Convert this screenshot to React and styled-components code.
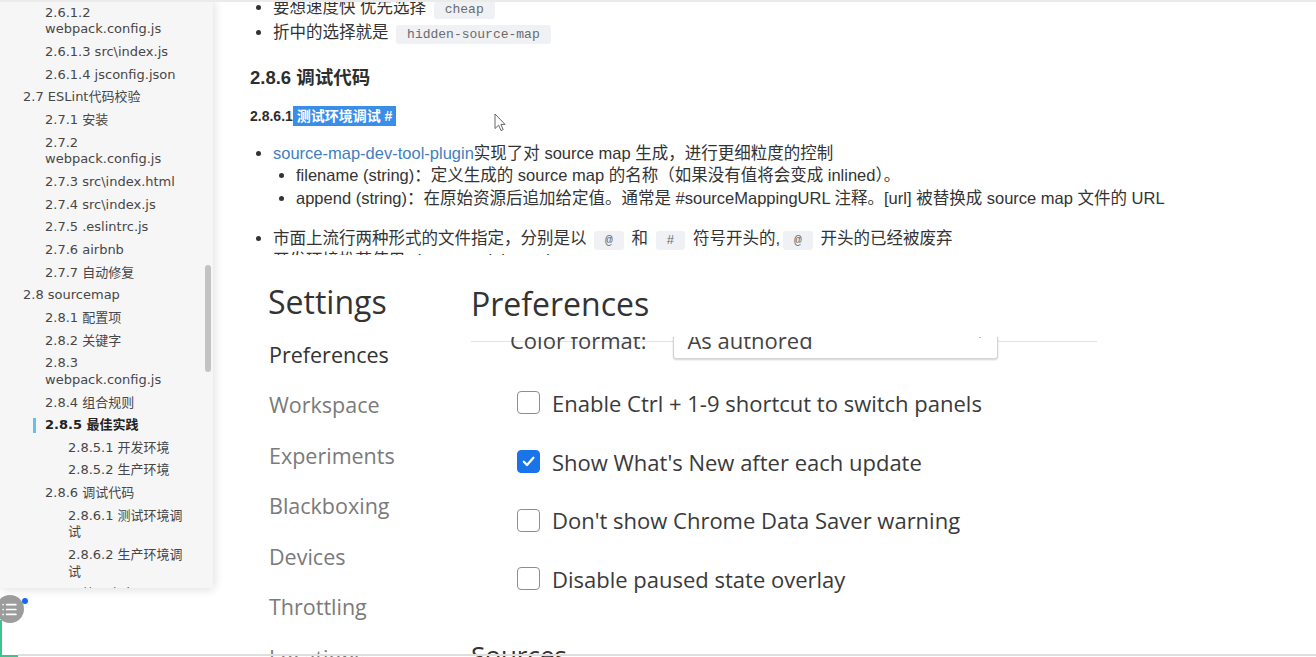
import React from 'react';
import styled, { createGlobalStyle } from 'styled-components';
import { List as ListIcon } from 'lucide-react';

const GlobalStyle = createGlobalStyle`
  html, body {
    margin: 0;
    padding: 0;
    background: #fff;
  }
  body {
    width: 1316px;
    height: 657px;
    overflow: hidden;
    font-family: "Liberation Sans", "Noto Sans CJK SC", sans-serif;
  }
  * {
    box-sizing: border-box;
  }
`;

const toc = [
  { level: 1, text: '2.6.1.2 webpack.config.js' },
  { level: 1, text: '2.6.1.3 src\\index.js' },
  { level: 1, text: '2.6.1.4 jsconfig.json' },
  { level: 0, text: '2.7 ESLint代码校验' },
  { level: 1, text: '2.7.1 安装' },
  { level: 1, text: '2.7.2 webpack.config.js' },
  { level: 1, text: '2.7.3 src\\index.html' },
  { level: 1, text: '2.7.4 src\\index.js' },
  { level: 1, text: '2.7.5 .eslintrc.js' },
  { level: 1, text: '2.7.6 airbnb' },
  { level: 1, text: '2.7.7 自动修复' },
  { level: 0, text: '2.8 sourcemap' },
  { level: 1, text: '2.8.1 配置项' },
  { level: 1, text: '2.8.2 关键字' },
  { level: 1, text: '2.8.3 webpack.config.js' },
  { level: 1, text: '2.8.4 组合规则' },
  { level: 1, text: '2.8.5 最佳实践', active: true },
  { level: 2, text: '2.8.5.1 开发环境' },
  { level: 2, text: '2.8.5.2 生产环境' },
  { level: 1, text: '2.8.6 调试代码' },
  { level: 2, text: '2.8.6.1 测试环境调试' },
  { level: 2, text: '2.8.6.2 生产环境调试' },
  { level: 1, text: '2.8.7 第三方库' },
];

const navItems = ['Preferences', 'Workspace', 'Experiments', 'Blackboxing', 'Devices', 'Throttling', 'Locations'];

const options = [
  { label: 'Enable Ctrl + 1-9 shortcut to switch panels', checked: false },
  { label: "Show What's New after each update", checked: true },
  { label: "Don't show Chrome Data Saver warning", checked: false },
  { label: 'Disable paused state overlay', checked: false },
];

export default function App() {
  return (
    <Page>
      <GlobalStyle />
      <Sidebar>
        {toc.map((item) => (
          <TocItem key={item.text} $level={item.level} $active={item.active}>
            {item.text}
          </TocItem>
        ))}
        <ScrollThumb />
      </Sidebar>

      <Main>
        <Doc>
          <Bullets $lh={25}>
            <li>
              要想速度快 优先选择 <Code>cheap</Code>
            </li>
            <li>
              折中的选择就是 <Code>hidden-source-map</Code>
            </li>
          </Bullets>
          <H3>2.8.6 调试代码</H3>
          <H4>
            2.8.6.1<Selection> 测试环境调试 # </Selection>
          </H4>
          <Bullets $lh={22.5} $top={15.75}>
            <li>
              <Link>source-map-dev-tool-plugin</Link>实现了对 source map 生成，进行更细粒度的控制
              <Bullets $lh={22.5}>
                <li>filename (string)：定义生成的 source map 的名称（如果没有值将会变成 inlined）。</li>
                <li>append (string)：在原始资源后追加给定值。通常是 #sourceMappingURL 注释。[url] 被替换成 source map 文件的 URL</li>
              </Bullets>
            </li>
          </Bullets>
          <Bullets $lh={22.5} $top={17.5}>
            <li>
              市面上流行两种形式的文件指定，分别是以 <Code>@</Code> 和 <Code>#</Code> 符号开头的,<Code>@</Code> 开头的已经被废弃
            </li>
            <li>开发环境推荐使用 cheap-module-eval-source-map</li>
          </Bullets>
        </Doc>
        <Cursor width="12" height="19" viewBox="0 0 12 19">
          <path d="M1 1 L1 15.5 L4.6 12.2 L7 17.6 L9.2 16.6 L6.9 11.4 L11 11.4 Z" fill="#fff" stroke="#666" strokeWidth="1" strokeLinejoin="round" />
        </Cursor>
      </Main>

      <SettingsWindow>
        <NavColumn>
          <SettingsTitle>Settings</SettingsTitle>
          <div>
            {navItems.map((name, i) => (
              <NavItem key={name} $active={i === 0}>
                {name}
              </NavItem>
            ))}
          </div>
        </NavColumn>
        <PrefsColumn>
          <PrefsTitle>Preferences</PrefsTitle>
          <ScrollArea>
            <ScrollContent>
              <FieldRow>
                <FieldLabel>Color format:</FieldLabel>
                <Select>
                  <span>As authored</span>
                  <Caret />
                </Select>
              </FieldRow>
              <Options>
                {options.map((opt) => (
                  <CheckRow key={opt.label}>
                    <CheckBox $checked={opt.checked}>
                      {opt.checked && (
                        <svg width="15" height="15" viewBox="0 0 15 15">
                          <polyline points="2.8,7.8 6,11 12.4,3.8" fill="none" stroke="#fff" strokeWidth="2.3" strokeLinecap="round" strokeLinejoin="round" />
                        </svg>
                      )}
                    </CheckBox>
                    <CheckLabel>{opt.label}</CheckLabel>
                  </CheckRow>
                ))}
              </Options>
              <SectionTitle>Sources</SectionTitle>
            </ScrollContent>
          </ScrollArea>
        </PrefsColumn>
      </SettingsWindow>

      <FloatButton>
        <ListIcon size={17} color="#fff" strokeWidth={2.4} />
      </FloatButton>
      <Dot />
      <FrameTop />
      <FrameBottom />
      <ProgressH />
      <ProgressV />
    </Page>
  );
}

const Page = styled.div`
  position: relative;
  display: flex;
  width: 1316px;
  height: 657px;
  overflow: hidden;
  background: #fff;
`;

const Sidebar = styled.nav`
  position: relative;
  z-index: 2;
  flex-shrink: 0;
  width: 213px;
  height: 588px;
  padding: 1.7px 23px 0 23px;
  overflow: hidden;
  background: #f6f6f7;
  box-shadow: 3px 0 9px rgba(0, 0, 0, 0.07), 0 4px 9px rgba(0, 0, 0, 0.06);
`;

const TocItem = styled.div`
  position: relative;
  padding: 3px 0 3px ${({ $level }) => [0, 22, 45][$level]}px;
  font-family: "DejaVu Sans", "Noto Sans CJK SC", sans-serif;
  font-size: 13px;
  line-height: 16.65px;
  color: ${({ $active }) => ($active ? '#222' : '#474747')};
  font-weight: ${({ $active }) => ($active ? 700 : 400)};

  &::before {
    content: '';
    display: ${({ $active }) => ($active ? 'block' : 'none')};
    position: absolute;
    left: ${({ $level }) => [0, 22, 45][$level] - 12}px;
    top: 4px;
    width: 3px;
    height: 15px;
    background: #5fc3ec;
  }
`;

const ScrollThumb = styled.div`
  position: absolute;
  right: 2px;
  top: 265px;
  width: 6px;
  height: 107px;
  border-radius: 3px;
  background: #c3c3c3;
`;

const Main = styled.main`
  position: relative;
  flex: 1;
  padding: 0 40px 0 37px;
  color: #333;
  font-size: 16.5px;
`;

const Doc = styled.article`
  margin-top: -5.5px;
`;

const Bullets = styled.ul`
  margin: ${({ $top }) => $top || 0}px 0 0;
  padding-left: 23px;
  list-style: disc;
  line-height: ${({ $lh }) => $lh}px;
  white-space: nowrap;

  & > li {
    line-height: ${({ $lh }) => $lh}px;
  }
`;

const Code = styled.code`
  margin: 0 3px;
  padding: 2px 11px;
  border-radius: 3px;
  background: #f0f1f5;
  color: #6b6b6b;
  font-family: "Liberation Mono", monospace;
  font-size: 13px;
  line-height: 1;
`;

const H3 = styled.h3`
  margin: 20px 0 0;
  font-size: 18.5px;
  line-height: 25px;
  font-weight: 700;
  color: #2e2e2e;
`;

const H4 = styled.h4`
  margin: 16.5px 0 0;
  font-size: 14px;
  line-height: 20px;
  font-weight: 700;
  color: #2e2e2e;
`;

const Selection = styled.span`
  padding: 2px 4px 2px 0;
  background: #3a8ee8;
  color: #fff;
`;

const Link = styled.a`
  color: #3f7fc0;
  text-decoration: none;
`;

const Cursor = styled.svg`
  position: absolute;
  left: 281px;
  top: 113px;
`;

const SettingsWindow = styled.section`
  position: absolute;
  z-index: 1;
  top: 255px;
  left: 213px;
  right: 0;
  bottom: 0;
  display: flex;
  padding-left: 55px;
  background: #fff;
  font-family: "Open Sans", sans-serif;
`;

const NavColumn = styled.div`
  width: 203px;
  flex-shrink: 0;
  padding-top: 25px;
`;

const SettingsTitle = styled.h1`
  margin: 0 0 5.75px;
  font-size: 32px;
  font-weight: 400;
  line-height: 44px;
  color: #333;
`;

const NavItem = styled.div`
  padding-left: 1px;
  font-size: 21.5px;
  line-height: 50.5px;
  color: ${({ $active }) => ($active ? '#333' : '#7a7a7a')};
`;

const PrefsColumn = styled.div`
  display: flex;
  flex-direction: column;
  width: 626px;
  flex-shrink: 0;
  padding-top: 27px;
`;

const PrefsTitle = styled.h2`
  margin: 0 0 11px;
  font-size: 32px;
  font-weight: 400;
  line-height: 44px;
  color: #333;
`;

const ScrollArea = styled.div`
  flex: 1;
  min-height: 0;
  overflow: hidden;
  background: linear-gradient(#e3e3e3, #e3e3e3) no-repeat 0 4px / 100% 1px;
`;

const ScrollContent = styled.div`
  margin-top: -13px;
`;

const FieldRow = styled.div`
  display: flex;
  align-items: center;
  gap: 27px;
  height: 35px;
  padding-left: 39px;
`;

const FieldLabel = styled.span`
  margin-bottom: 4px;
  font-size: 22px;
  line-height: 30px;
  color: #444;
`;

const Select = styled.div`
  display: flex;
  align-items: center;
  justify-content: space-between;
  width: 325px;
  height: 35px;
  padding: 0 13px 4px;
  border: 1px solid #d3d3d3;
  border-radius: 3px;
  background: #fff;
  box-shadow: 0 1px 2px rgba(0, 0, 0, 0.18);
  font-size: 22px;
  line-height: 30px;
  color: #444;
`;

const Caret = styled.span`
  width: 0;
  height: 0;
  margin-bottom: 8px;
  border-left: 4px solid transparent;
  border-right: 4px solid transparent;
  border-top: 5px solid #555;
`;

const Options = styled.div`
  margin-top: 14.7px;
`;

const CheckRow = styled.label`
  display: flex;
  align-items: center;
  gap: 12px;
  height: 58.6px;
  padding-left: 46px;
`;

const CheckBox = styled.span`
  display: flex;
  align-items: center;
  justify-content: center;
  width: 23px;
  height: 23px;
  border-radius: 4px;
  border: 1.5px solid ${({ $checked }) => ($checked ? '#1a73e8' : '#8e8e8e')};
  background: ${({ $checked }) => ($checked ? '#1a73e8' : '#fff')};
`;

const CheckLabel = styled.span`
  font-size: 22px;
  color: #3a3a3a;
`;

const SectionTitle = styled.h3`
  margin: 29.4px 0 0;
  font-size: 26px;
  font-weight: 400;
  line-height: 36px;
  color: #333;
`;

const FloatButton = styled.div`
  position: absolute;
  z-index: 3;
  left: -4px;
  top: 595px;
  width: 28px;
  height: 28px;
  border-radius: 50%;
  background: #9c9c9c;
  display: flex;
  align-items: center;
  justify-content: center;
  padding-right: 2px;
`;

const Dot = styled.div`
  position: absolute;
  z-index: 3;
  left: 22px;
  top: 598px;
  width: 6px;
  height: 6px;
  border-radius: 50%;
  background: #1566f0;
`;

const FrameTop = styled.div`
  position: absolute;
  z-index: 5;
  top: 0;
  left: 0;
  right: 0;
  height: 2px;
  background: #ebebeb;
`;

const FrameBottom = styled.div`
  position: absolute;
  z-index: 5;
  bottom: 1px;
  left: 18px;
  right: 0;
  height: 2px;
  background: #dedede;
`;

const ProgressH = styled.div`
  position: absolute;
  z-index: 5;
  bottom: 0;
  left: 0;
  width: 18px;
  height: 2px;
  background: #3cc48e;
`;

const ProgressV = styled.div`
  position: absolute;
  z-index: 5;
  top: 620px;
  bottom: 0;
  left: 0;
  width: 2px;
  background: #3cc48e;
`;
